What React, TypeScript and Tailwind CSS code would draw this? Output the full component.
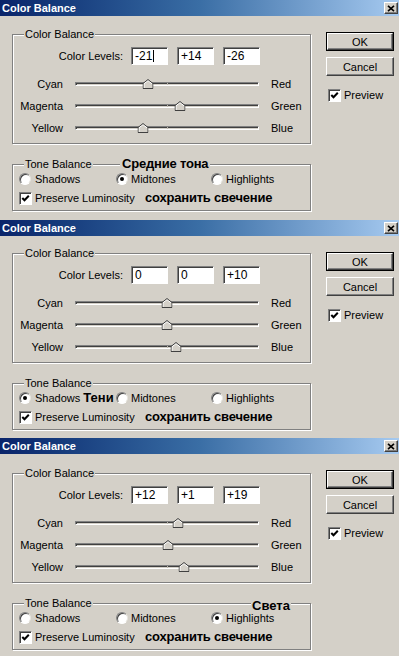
import React from "react";

type Tone = "shadows" | "midtones" | "highlights";

const fmt = (v: number) => (v > 0 ? `+${v}` : `${v}`);

const sunken =
  "border border-t-[#808080] border-l-[#808080] border-b-white border-r-white shadow-[inset_1px_1px_0_#404040]";
const raised =
  "border border-t-white border-l-white border-b-[#404040] border-r-[#404040] shadow-[inset_-1px_-1px_0_#808080]";
const etched = "border border-[#808080] shadow-[inset_1px_1px_0_#fff,1px_1px_0_#fff]";

function TitleBar() {
  return (
    <div className="h-[16px] shrink-0 flex items-center justify-between bg-linear-to-r from-[#0a246a] via-[#3a6ea5] to-[#a6caf0] pl-[2px] pr-[1px]">
      <span className="text-white font-bold text-[11px] leading-none">Color Balance</span>
      <div className={`w-[14px] h-[12px] bg-[#d4d0c8] flex items-center justify-center ${raised}`}>
        <svg width="8" height="7" viewBox="0 0 8 7">
          <path d="M1 0.8 L7 6.2 M7 0.8 L1 6.2" stroke="#000" strokeWidth="1.6" />
        </svg>
      </div>
    </div>
  );
}

function Legend({ children }: { children: React.ReactNode }) {
  return (
    <span className="absolute left-[11px] -top-[8px] px-[1px] bg-[#d4d0c8] leading-[14px]">{children}</span>
  );
}

function Field({ value, caret }: { value: string; caret?: boolean }) {
  return (
    <div className={`w-[37px] h-[18px] bg-white pl-[3px] flex items-center ${sunken}`}>
      <span className="text-[12px] leading-none">{value}</span>
      {caret && <span className="ml-[1px] w-px h-[12px] bg-black" />}
    </div>
  );
}

function Thumb({ pct }: { pct: number }) {
  return (
    <svg
      width="11"
      height="10"
      viewBox="0 0 11 10"
      className="absolute -top-[4px] -translate-x-1/2"
      style={{ left: `${pct}%` }}
    >
      <polygon points="0.5,4.5 5.5,0.5 10.5,4.5 10.5,9.5 0.5,9.5" fill="#d4d0c8" />
      <polyline points="1.5,9 1.5,4.8 5.5,1.6 9.5,4.8" fill="none" stroke="#fff" />
      <polyline points="0.5,9.5 0.5,4.5 5.5,0.5 10.5,4.5 10.5,9.5 0.5,9.5" fill="none" stroke="#404040" />
    </svg>
  );
}

function SliderRow({ left, right, value }: { left: string; right: string; value: number }) {
  const pct = ((value + 100) / 200) * 100;
  return (
    <div className="flex items-center h-[22px]">
      <span className="w-[50px] text-right">{left}</span>
      <div className={`relative ml-[12px] w-[184px] h-[4px] bg-[#d4d0c8] ${sunken}`}>
        <div className="absolute left-1/2 top-0 w-px h-full bg-[#b8b4ac]" />
        <Thumb pct={pct} />
      </div>
      <span className="ml-[12px]">{right}</span>
    </div>
  );
}

function Radio({ on }: { on: boolean }) {
  return (
    <div className="w-[12px] h-[12px] shrink-0 rounded-full bg-white border border-t-[#808080] border-l-[#808080] border-b-white border-r-[#e8e6e0] shadow-[inset_1px_1px_0_#404040] flex items-center justify-center">
      {on && <div className="w-[4px] h-[4px] rounded-full bg-black" />}
    </div>
  );
}

function Check() {
  return (
    <div className={`w-[13px] h-[13px] shrink-0 bg-white flex items-center justify-center ${sunken}`}>
      <svg width="9" height="9" viewBox="0 0 9 9">
        <path d="M1.3 4 L3.5 6.3 L7.8 1.8" fill="none" stroke="#000" strokeWidth="2" />
      </svg>
    </div>
  );
}

function ColorGroup({ levels, caret }: { levels: number[]; caret?: boolean }) {
  return (
    <div className={`relative w-[299px] h-[110px] pt-[12px] ${etched}`}>
      <Legend>Color Balance</Legend>
      <div className="flex items-center h-[18px]">
        <span className="w-[110px] text-right">Color Levels:</span>
        <div className="ml-[8px] flex gap-[9px]">
          {levels.map((v, i) => (
            <Field key={i} value={fmt(v)} caret={caret && i === 0} />
          ))}
        </div>
      </div>
      <div className="mt-[8px]">
        <SliderRow left="Cyan" right="Red" value={levels[0]} />
        <SliderRow left="Magenta" right="Green" value={levels[1]} />
        <SliderRow left="Yellow" right="Blue" value={levels[2]} />
      </div>
    </div>
  );
}

function ToneGroup({ tone }: { tone: Tone }) {
  return (
    <div className={`relative mt-[20px] w-[299px] h-[47px] pt-[6px] ${etched}`}>
      <Legend>Tone Balance</Legend>
      {tone === "midtones" && (
        <span className="absolute left-[107px] -top-[9px] px-[2px] bg-[#d4d0c8] font-bold text-[13px] leading-[16px] tracking-[-0.2px]">
          Средние тона
        </span>
      )}
      {tone === "highlights" && (
        <span className="absolute left-[238px] -top-[6px] px-[1px] bg-[#d4d0c8] font-bold text-[13px] leading-[16px]">
          Света
        </span>
      )}
      <div className="flex items-center h-[16px] pl-[6px]">
        <div className="w-[97px] flex items-center">
          <Radio on={tone === "shadows"} />
          <span className="ml-[4px]">Shadows</span>
          {tone === "shadows" && <span className="ml-[3px] font-bold text-[13px]">Тени</span>}
        </div>
        <div className="w-[95px] flex items-center">
          <Radio on={tone === "midtones"} />
          <span className="ml-[3px]">Midtones</span>
        </div>
        <div className="flex items-center">
          <Radio on={tone === "highlights"} />
          <span className="ml-[3px]">Highlights</span>
        </div>
      </div>
      <div className="mt-[3px] flex items-center h-[16px] pl-[6px]">
        <div className="w-[126px] flex items-center">
          <Check />
          <span className="ml-[3px]">Preserve Luminosity</span>
        </div>
        <span className="font-bold text-[13px] tracking-[-0.2px]">сохранить свечение</span>
      </div>
    </div>
  );
}

function Dialog({
  levels,
  tone,
  height,
  top,
  caret,
}: {
  levels: number[];
  tone: Tone;
  height: string;
  top: string;
  caret?: boolean;
}) {
  return (
    <div className={`flex flex-col overflow-hidden bg-[#d4d0c8] ${height}`}>
      <TitleBar />
      <div className="flex">
        <div className={`pl-[12px] ${top}`}>
          <ColorGroup levels={levels} caret={caret} />
          <ToneGroup tone={tone} />
        </div>
        <div className="ml-[15px] pt-[16px] flex flex-col">
          <div className="border border-black">
            <div className={`w-[66px] h-[17px] flex items-center justify-center ${raised}`}>OK</div>
          </div>
          <div className={`mt-[6px] w-[68px] h-[19px] flex items-center justify-center ${raised}`}>Cancel</div>
          <div className="mt-[12px] ml-[2px] flex items-center">
            <Check />
            <span className="ml-[3px]">Preview</span>
          </div>
        </div>
      </div>
    </div>
  );
}

export default function App() {
  return (
    <div className="w-[399px] h-[656px] overflow-hidden flex flex-col font-['Liberation_Sans',Arial,sans-serif] text-[11px] leading-[14px] text-black bg-[#d4d0c8]">
      <Dialog levels={[-21, 14, -26]} tone="midtones" height="h-[220px]" top="pt-[18px]" caret />
      <Dialog levels={[0, 0, 10]} tone="shadows" height="h-[218px]" top="pt-[17px]" />
      <Dialog levels={[12, 1, 19]} tone="highlights" height="h-[218px]" top="pt-[19px]" />
    </div>
  );
}
